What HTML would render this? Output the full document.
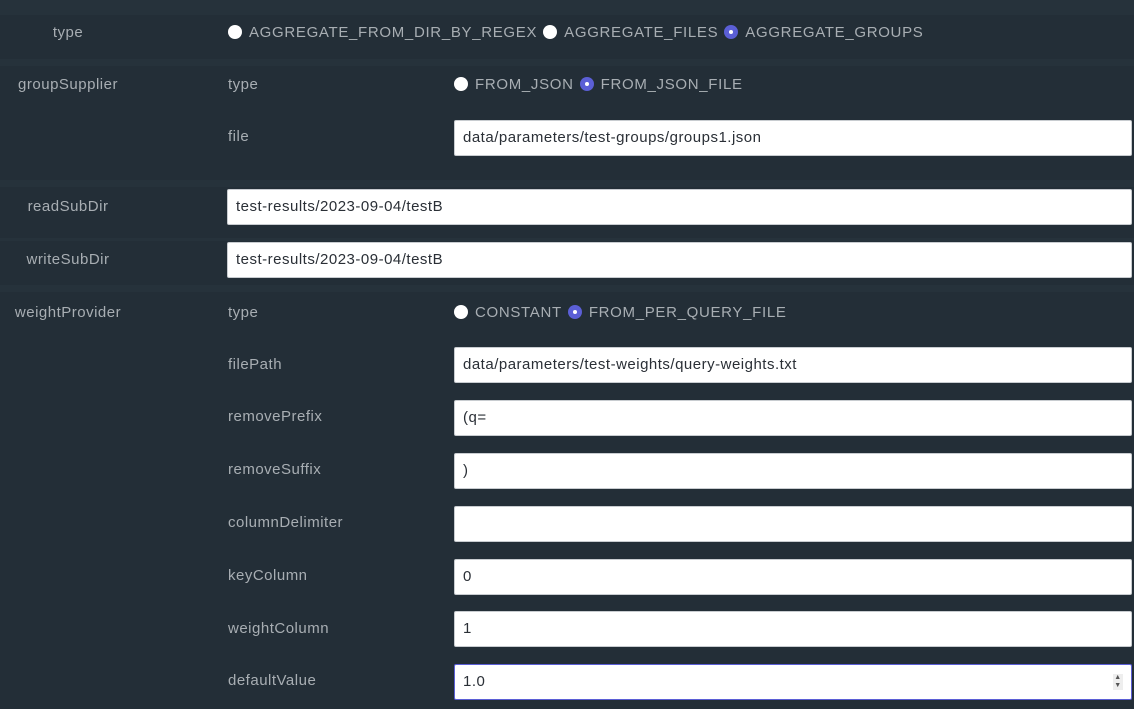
<!DOCTYPE html>
<html><head><style>
body{margin:0;width:1134px;height:709px;background:#232e37;font-family:"Liberation Sans",sans-serif;overflow:hidden;position:relative}
.band{position:absolute;left:0;width:1134px;background:#26323b}
.l{position:absolute;color:#a8aeb3;font-size:15px;line-height:18px;letter-spacing:.5px}
.c{position:absolute;width:136px;text-align:center;left:0}
.in{position:absolute;background:#fff;border:1px solid #c8ccd0;border-radius:2px;height:36px;box-sizing:border-box;color:#2a2f36;font-size:15px;line-height:34px;padding-left:8px;letter-spacing:.5px}
.r{display:inline-block;width:14px;height:14px;border-radius:50%;background:#fff;vertical-align:-2px;margin-right:7px}
.rs{background:#5b5fd6;position:relative}
.rs:after{content:"";position:absolute;left:5px;top:5px;width:4px;height:4px;border-radius:50%;background:#fff}
.opt{color:#a8aeb3;font-size:15px;letter-spacing:.68px;margin-right:6px}
</style></head><body>
<div class="band" style="top:0;height:15px"></div>
<div class="band" style="top:59px;height:7px"></div>
<div class="band" style="top:180px;height:7px"></div>
<div class="band" style="top:238px;height:3px"></div>
<div class="band" style="top:285px;height:7px"></div>

<div class="l c" style="top:24px">type</div>
<div class="l" style="left:228px;top:24px"><span class="r"></span><span class="opt">AGGREGATE_FROM_DIR_BY_REGEX</span><span class="r"></span><span class="opt">AGGREGATE_FILES</span><span class="r rs"></span><span class="opt">AGGREGATE_GROUPS</span></div>

<div class="l c" style="top:76px">groupSupplier</div>
<div class="l" style="left:228px;top:76px">type</div>
<div class="l" style="left:454px;top:76px"><span class="r"></span><span class="opt">FROM_JSON</span><span class="r rs"></span><span class="opt">FROM_JSON_FILE</span></div>
<div class="l" style="left:228px;top:128px">file</div>
<div class="in" style="left:454px;top:120px;width:678px">data/parameters/test-groups/groups1.json</div>

<div class="l c" style="top:198px">readSubDir</div>
<div class="in" style="left:227px;top:189px;width:905px">test-results/2023-09-04/testB</div>
<div class="l c" style="top:251px">writeSubDir</div>
<div class="in" style="left:227px;top:242px;width:905px">test-results/2023-09-04/testB</div>

<div class="l c" style="top:304px">weightProvider</div>
<div class="l" style="left:228px;top:304px">type</div>
<div class="l" style="left:454px;top:304px"><span class="r"></span><span class="opt">CONSTANT</span><span class="r rs"></span><span class="opt">FROM_PER_QUERY_FILE</span></div>
<div class="l" style="left:228px;top:356px">filePath</div>
<div class="in" style="left:454px;top:347px;width:678px">data/parameters/test-weights/query-weights.txt</div>
<div class="l" style="left:228px;top:408px">removePrefix</div>
<div class="in" style="left:454px;top:400px;width:678px">(q=</div>
<div class="l" style="left:228px;top:461px">removeSuffix</div>
<div class="in" style="left:454px;top:453px;width:678px">)</div>
<div class="l" style="left:228px;top:514px">columnDelimiter</div>
<div class="in" style="left:454px;top:506px;width:678px"></div>
<div class="l" style="left:228px;top:567px">keyColumn</div>
<div class="in" style="left:454px;top:559px;width:678px">0</div>
<div class="l" style="left:228px;top:620px">weightColumn</div>
<div class="in" style="left:454px;top:611px;width:678px">1</div>
<div class="l" style="left:228px;top:672px">defaultValue</div>
<div class="in" style="left:454px;top:664px;width:678px;border:1px solid #5b5fd6">1.0<span style="position:absolute;right:8px;top:9px;width:10px;height:16px;background:#eee;font-size:7px;line-height:8px;text-align:center;color:#555">▲<br>▼</span></div>
</body></html>
